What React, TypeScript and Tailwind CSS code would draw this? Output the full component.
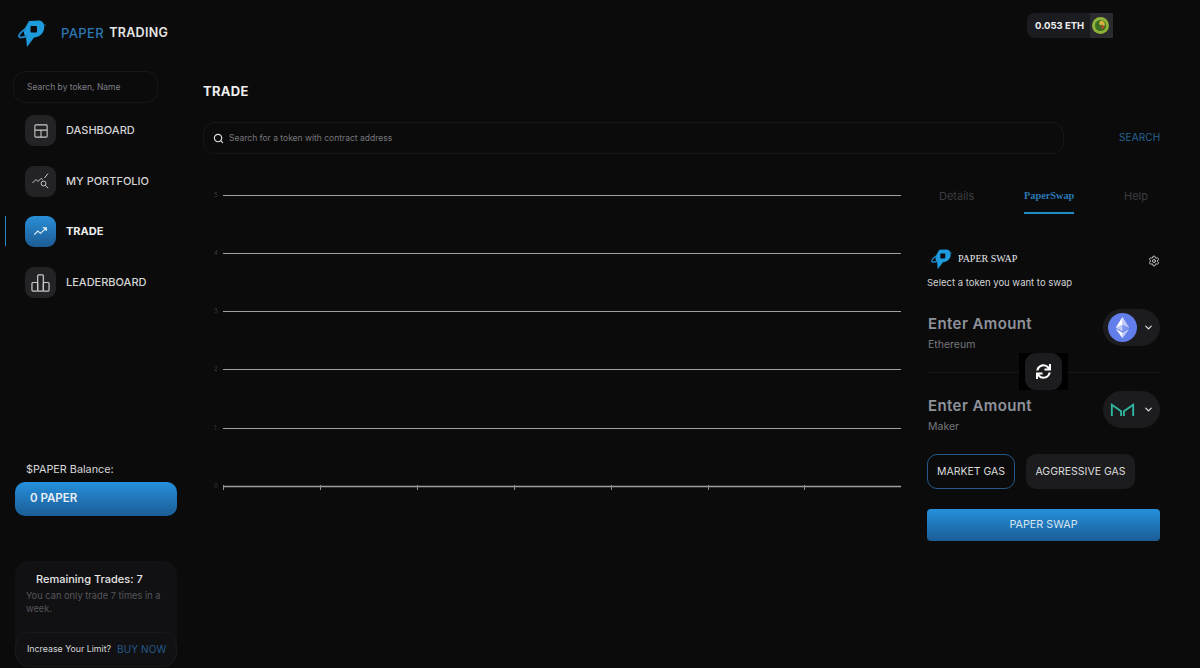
import { Search, ChevronDown, Settings } from "lucide-react";
import { FaSync } from "react-icons/fa";

const font = "font-['Inter','Liberation_Sans',sans-serif]";

function Logo({ className }: { className: string }) {
  return (
    <svg viewBox="0 0 28 28" className={className}>
      <path d="M11 1 L21 0.5 C25.5 1 27 5 26 9.5 C25 14 21 17 16 17.5 L9 27 L8 17 C5 14 6 10 7 8 Z" fill="#1d9bdc" />
      <path d="M7.5 9 C3 12 0.8 15 1 16.5 C1.5 18 5 17.5 9 16" fill="none" stroke="#1d86c6" strokeWidth="2" />
      <rect x="12.5" y="6" width="6.5" height="6.5" rx="1" fill="#0b0b0c" />
      <circle cx="27" cy="5" r="0.7" fill="#1d86c6" />
    </svg>
  );
}

function DashIcon() {
  return (
    <svg viewBox="0 0 16 16" className="h-[14px] w-[14px]" fill="none" stroke="#c9c9c9" strokeWidth="1.2">
      <rect x="1" y="1" width="14" height="14" rx="1" />
      <path d="M1 7h14M8 7v8" />
    </svg>
  );
}

function PortfolioIcon() {
  return (
    <svg viewBox="0 0 18 16" className="h-[16px] w-[18px]" fill="none" stroke="#c9c9c9" strokeWidth="1">
      <path d="M0.5 10l3.5-3.5 2 2 3.2-3.2 1.5 1.2M12.5 5l3.5-4.5" />
      <circle cx="11.5" cy="10.5" r="2.4" />
      <path d="M13.3 12.3l2.8 3" />
    </svg>
  );
}

function TradeIcon() {
  return (
    <svg viewBox="0 0 16 10" className="h-[9px] w-[15px]" fill="none" stroke="#e8f2fa" strokeWidth="1.2">
      <path d="M1 8.5l4-4 3 2.5 6-5.5M10.5 1H14.5V4.5" />
    </svg>
  );
}

function BoardIcon() {
  return (
    <svg viewBox="0 0 20 20" className="h-[19px] w-[19px]" fill="none" stroke="#c9c9c9" strokeWidth="1.3">
      <rect x="1" y="10" width="6" height="9" rx="1" />
      <rect x="7" y="2" width="6" height="17" rx="1" />
      <rect x="13" y="10" width="6" height="9" rx="1" />
    </svg>
  );
}

function EthIcon() {
  return (
    <svg viewBox="0 0 30 30" className="h-[29px] w-[29px]">
      <circle cx="15" cy="15" r="15" fill="#627eea" />
      <path d="M15 4v8.2l7 3.1z" fill="#ffffff" fillOpacity="0.6" />
      <path d="M15 4L8 15.3l7-3.1z" fill="#ffffff" />
      <path d="M15 20.5V26l7-9.7z" fill="#ffffff" fillOpacity="0.6" />
      <path d="M15 20.5V26l-7-9.7z" fill="#ffffff" />
      <path d="M15 19.2l7-4-7-3.1z" fill="#ffffff" fillOpacity="0.2" />
      <path d="M8 15.2l7 4v-7.1z" fill="#ffffff" fillOpacity="0.6" />
    </svg>
  );
}

function MakerIcon() {
  return (
    <svg viewBox="0 0 26 14" className="h-[13px] w-[25px]" fill="none" stroke="#2eb6a0" strokeWidth="2">
      <path d="M1.5 14V2L11.5 9V14M24.5 14V2L14.5 9V14" />
    </svg>
  );
}

function Avatar() {
  return (
    <svg viewBox="0 0 16 16" className="h-[17px] w-[17px]">
      <circle cx="8" cy="8" r="8" fill="#8fb339" />
      <circle cx="8" cy="8" r="5.2" fill="#3c6e22" />
      <path d="M8 3.5c3 0 4.5 2 4 4.5-1 .5-2 0-2.5-1L8 8 6.5 6z" fill="#d8b23c" />
      <circle cx="10" cy="9.5" r="1.6" fill="#b5452c" />
    </svg>
  );
}

const nav = [
  { label: "DASHBOARD", icon: <DashIcon /> },
  { label: "MY PORTFOLIO", icon: <PortfolioIcon /> },
  { label: "TRADE", icon: <TradeIcon />, active: true },
  { label: "LEADERBOARD", icon: <BoardIcon /> },
];

function Sidebar() {
  return (
    <aside className="flex h-full w-[191px] shrink-0 flex-col">
      <div className="flex h-[71px] items-center pb-[4px] pl-[18px]">
        <Logo className="h-[28px] w-[28px]" />
        <span className="ml-[15px] text-[13px] font-medium tracking-[0.4px] text-[#2a78b4]">PAPER</span>
        <span className="ml-[5px] text-[12.5px] font-semibold tracking-[0.3px] text-[#e6e6e6]">TRADING</span>
      </div>

      <div className="ml-[13px] flex h-[32px] w-[145px] items-center rounded-[12px] border border-[#17171a] pl-[13px] text-[8.5px] text-[#7f7f84]">
        Search by token, Name
      </div>

      <nav className="mt-[12px] flex flex-col gap-[19.5px]">
        {nav.map(({ label, icon, active }) => (
          <div key={label} className="relative flex h-[31px] items-center pl-[25px]">
            {active && <div className="absolute left-[5px] top-0 h-[30px] w-px bg-[#2a86c8]" />}
            <div
              className={
                active
                  ? "flex h-[31px] w-[31px] items-center justify-center rounded-[9px] bg-gradient-to-b from-[#2a8fd8] to-[#1c5c94]"
                  : "flex h-[31px] w-[31px] items-center justify-center rounded-[9px] bg-[#232325]"
              }
            >
              {icon}
            </div>
            <span
              className={
                active
                  ? "ml-[10px] text-[11px] font-bold text-[#eeeeee]"
                  : "ml-[10px] text-[11px] font-medium text-[#d4d4d4]"
              }
            >
              {label}
            </span>
          </div>
        ))}
      </nav>

      <div className="mt-[163px] pl-[26px] text-[10.8px] leading-[17px] text-[#d8d8d8]">$PAPER Balance:</div>
      <div className="ml-[15px] mt-[4px] flex h-[34px] w-[162px] items-center rounded-[10px] bg-gradient-to-b from-[#2590dc] to-[#1b5d96] pl-[15px] text-[11.5px] font-semibold text-[#e8eef4]">
        0 PAPER
      </div>

      <div className="ml-[15px] mt-[45px] flex h-[106px] w-[162px] flex-col rounded-[14px] bg-[#111113]">
        <div className="pl-[21px] pt-[10px] text-[11px] font-medium text-[#e6e6e6]">Remaining Trades: 7</div>
        <div className="pl-[11px] pr-[10px] pt-[2px] text-[9.3px] leading-[13px] text-[#55555a]">
          You can only trade 7 times in a week.
        </div>
        <div className="mt-auto flex h-[35px] items-center rounded-[14px] border border-[#1a1a1d] pl-[11px] text-[8.8px] text-[#d8d8d8]">
          Increase Your Limit?
          <span className="ml-[6px] text-[10px] tracking-[0.1px] text-[#24598a]">BUY NOW</span>
        </div>
      </div>
    </aside>
  );
}

const levels = [
  { y: 195, label: "5" },
  { y: 253, label: "4" },
  { y: 311, label: "3" },
  { y: 369, label: "2" },
  { y: 428, label: "1" },
  { y: 486, label: "0" },
];
const ticks = [223, 320, 417, 514, 611, 708, 804];

function Chart() {
  return (
    <svg viewBox="203 180 702 320" className="mt-[26px] h-[320px] w-[702px]">
      {levels.map(({ y, label }) => (
        <g key={label}>
          <text x="214" y={y + 2} fontSize="6" fill="#3a3a3c" fontFamily="Inter">
            {label}
          </text>
          <line x1="223" x2="901" y1={y + 0.5} y2={y + 0.5} stroke="#a0a0a0" strokeWidth={label === "0" ? 1.5 : 1.2} />
        </g>
      ))}
      {ticks.map((x) => (
        <line key={x} x1={x + 0.5} x2={x + 0.5} y1="485" y2="490" stroke="#8f8f8f" />
      ))}
    </svg>
  );
}

function TokenRow({ name, pill }: { name: string; pill: React.ReactNode }) {
  return (
    <div className="flex items-start justify-between">
      <div className="pl-px pt-[5px]">
        <div className="text-[15px] font-semibold leading-[20px] tracking-[0.4px] text-[#8f929b]">Enter Amount</div>
        <div className="mt-[4px] text-[10.5px] leading-[14px] text-[#77777b]">{name}</div>
      </div>
      <div className="flex h-[37px] w-[57px] items-center rounded-full bg-[#1c1c1e] pl-[5px]">
        <div className="flex w-[29px] justify-center">{pill}</div>
        <ChevronDown className="ml-[6px] h-[11px] w-[11px] text-[#e6e6e6]" strokeWidth={2.5} />
      </div>
    </div>
  );
}

function SwapPanel() {
  return (
    <div className="w-[233px] shrink-0">
      <div className="flex h-[43px] items-start justify-between text-[11px]">
        <div className="flex w-full items-start">
          <div className="ml-[12px] w-[35px] pt-[8px] text-[#3d3d40]">Details</div>
          <div className="ml-[50px] flex h-[34px] w-[50px] flex-col border-b-2 border-[#1f8ec6] pt-[8px] font-['Liberation_Serif',serif] text-[10.3px] font-bold text-[#2a78b4]">
            PaperSwap
          </div>
          <div className="ml-[50px] pt-[8px] text-[#3d3d40]">Help</div>
        </div>
      </div>

      <div className="mt-[24px] flex h-[24px] items-center">
        <Logo className="ml-[4px] h-[21px] w-[21px]" />
        <span className="mb-[1px] ml-[6px] font-['Liberation_Serif',serif] text-[10px] text-[#e6e6e6]">PAPER SWAP</span>
        <Settings className="ml-auto mt-[3px] h-[12px] w-[12px] text-[#d8d8d8]" strokeWidth={1.8} />
      </div>
      <div className="mt-[5px] text-[9.5px] leading-[14px] text-[#d4d4d4]">Select a token you want to swap</div>

      <div className="mt-[19px]">
        <TokenRow name="Ethereum" pill={<EthIcon />} />
      </div>

      <div className="relative mt-[20px] h-px bg-[#17171a]">
        <div className="absolute -top-[19px] left-[92px] flex h-[37px] w-[49px] items-center justify-center bg-black">
          <div className="flex h-[37px] w-[37px] items-center justify-center rounded-[11px] bg-[#1c1c1e]">
            <FaSync className="h-[15px] w-[15px] text-white" />
          </div>
        </div>
      </div>

      <div className="mt-[18px]">
        <TokenRow name="Maker" pill={<MakerIcon />} />
      </div>

      <div className="mt-[20px] flex gap-[11px] text-[10.5px] text-[#dcdcdc]">
        <div className="flex h-[35px] w-[88px] items-center justify-center rounded-[10px] border border-[#24598a]">MARKET GAS</div>
        <div className="flex h-[35px] w-[109px] items-center justify-center rounded-[10px] bg-[#1c1c1e]">AGGRESSIVE GAS</div>
      </div>

      <div className="mt-[20px] flex h-[32px] items-center justify-center rounded-[4px] bg-gradient-to-b from-[#2590dc] to-[#1b5d96] text-[10.8px] text-[#d8e6f2]">
        PAPER SWAP
      </div>
    </div>
  );
}

export default function App() {
  return (
    <div className={`flex h-[668px] w-[1200px] overflow-hidden bg-[#0b0b0c] ${font}`}>
      <Sidebar />
      <main className="flex min-w-0 flex-1 flex-col pl-[12px]">
        <div className="flex h-[51px] justify-end pr-[87px] pt-[13px]">
          <div className="flex h-[25px] w-[86px] items-center rounded-l-[8px] bg-[#1b1c20] pl-[8px] text-[9.5px] font-bold text-[#eeeeee]">
            <span className="pt-px">0.053 ETH</span>
            <span className="ml-auto flex h-[25px] w-[23px] items-center justify-center bg-[#2a2b2e] pr-[2px]">
              <Avatar />
            </span>
          </div>
        </div>

        <h1 className="mt-[31px] text-[13px] font-bold leading-[18px] tracking-[0.3px] text-[#eeeeee]">TRADE</h1>

        <div className="mt-[22px] flex items-center">
          <div className="flex h-[32px] w-[861px] items-center rounded-[12px] border border-[#17171a] pl-[9px] text-[8.5px] text-[#77777b]">
            <Search className="h-[11px] w-[11px] text-[#e0e0e0]" strokeWidth={2.5} />
            <span className="ml-[5px]">Search for a token with contract address</span>
          </div>
          <span className="ml-[55px] pb-[2px] text-[10px] tracking-[0.15px] text-[#24628f]">SEARCH</span>
        </div>

        <div className="flex">
          <Chart />
          <div className="ml-[22px] mt-[26px]">
            <SwapPanel />
          </div>
        </div>
      </main>
    </div>
  );
}
